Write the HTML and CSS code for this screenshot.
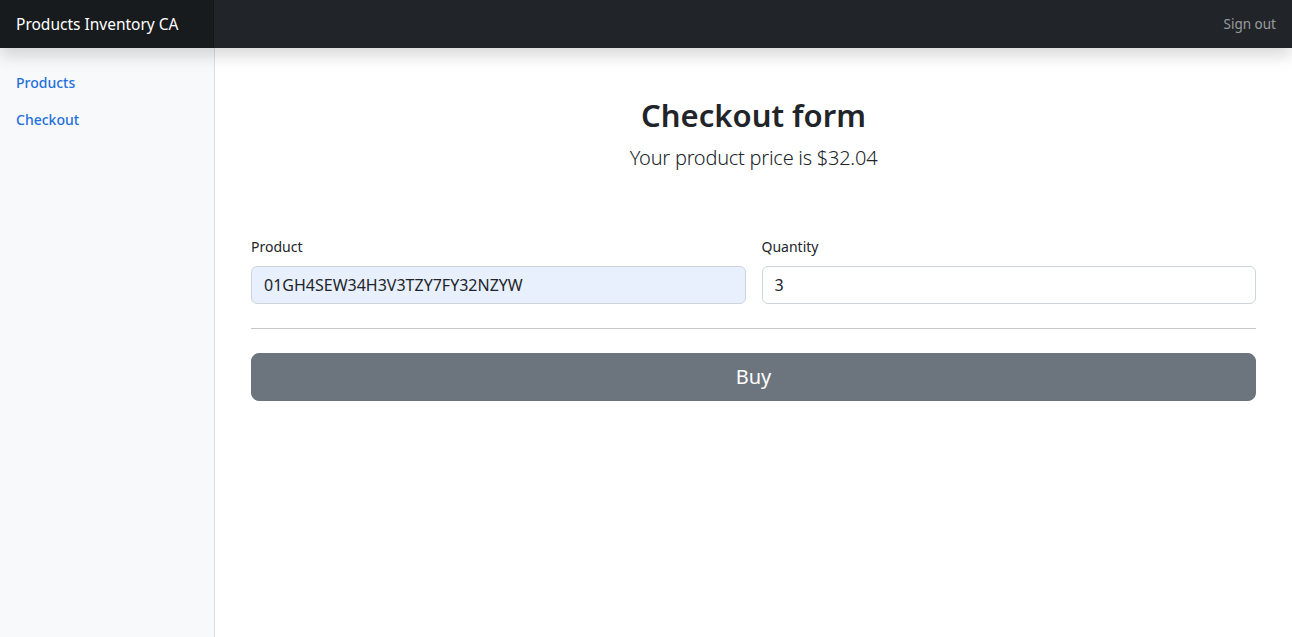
FILE: index.html
```html
<!DOCTYPE html>
<html lang="en">
<head>
<meta charset="utf-8">
<title>Products Inventory CA</title>
<link rel="stylesheet" href="styles.css">
</head>
<body>
<header class="navbar">
  <a class="brand" href="#">Products Inventory CA</a>
  <a class="signout" href="#">Sign out</a>
</header>
<div class="layout">
  <nav class="sidebar">
    <a class="side-link" href="#">Products</a>
    <a class="side-link" href="#">Checkout</a>
  </nav>
  <main class="main">
    <div class="intro">
      <h2 class="title">Checkout form</h2>
      <p class="lead">Your product price is $32.04</p>
    </div>
    <form class="form">
      <div class="row">
        <div class="col">
          <label class="label" for="product">Product</label>
          <input class="input input-filled" id="product" type="text" value="01GH4SEW34H3V3TZY7FY32NZYW">
        </div>
        <div class="col">
          <label class="label" for="qty">Quantity</label>
          <input class="input" id="qty" type="text" value="3">
        </div>
      </div>
      <hr class="divider">
      <button class="btn" type="button">Buy</button>
    </form>
  </main>
</div>
</body>
</html>
```

FILE: styles.css
```css
* { box-sizing: border-box; }
html, body { margin: 0; padding: 0; }
body {
  font-family: "Noto Sans", "Open Sans", sans-serif;
  font-size: 16px;
  line-height: 1.5;
  color: #212529;
  background: #fff;
  min-height: 100vh;
  display: flex;
  flex-direction: column;
}
a { text-decoration: none; }

.navbar {
  height: 48px;
  background: #212529;
  display: flex;
  align-items: stretch;
  justify-content: space-between;
  box-shadow: 0 8px 16px rgba(0,0,0,.15);
  position: relative;
  z-index: 2;
  flex: none;
}
.brand {
  width: 214px;
  padding: 1px 16px 0;
  display: flex;
  align-items: center;
  color: #fff;
  font-size: 15.5px;
  background: rgba(0,0,0,.25);
  box-shadow: inset -1px 0 0 rgba(0,0,0,.25);
  white-space: nowrap;
}
.signout {
  display: flex;
  align-items: center;
  padding: 1px 16px 0;
  color: rgba(255,255,255,.55);
  font-size: 13.5px;
}

.layout {
  flex: 1;
  display: flex;
}
.sidebar {
  width: 215px;
  flex: none;
  background: #f8f9fa;
  box-shadow: inset -1px 0 0 rgba(0,0,0,.1);
  padding-top: 16px;
  display: flex;
  flex-direction: column;
}
.side-link {
  display: block;
  padding: 8px 16px;
  font-size: 14px;
  line-height: 21px;
  font-weight: 500;
  color: #2470dc;
}

.main {
  flex: 1;
  padding: 0 36px;
}
.intro {
  padding: 48px 0 47px;
  text-align: center;
}
.title {
  margin: 0 0 8px;
  padding-top: 1px;
  font-size: 31px;
  line-height: 37px;
  font-weight: 600;
}
.lead {
  margin: 0 0 16px;
  padding-top: 1px;
  font-size: 20px;
  line-height: 30px;
  font-weight: 300;
  letter-spacing: -0.25px;
}

.row {
  display: flex;
  gap: 16px;
}
.col {
  flex: 1;
  min-width: 0;
}
.label {
  display: block;
  margin-bottom: 9px;
  font-size: 14px;
  line-height: 21px;
}
.input {
  display: block;
  width: 100%;
  height: 38px;
  padding: 6px 12px;
  font: inherit;
  font-size: 16px;
  color: #212529;
  background: #fff;
  border: 1px solid #ced4da;
  border-radius: 6px;
}
.input-filled { background: #e8f0fe; }

.divider {
  margin: 24px 0;
  border: 0;
  border-top: 1px solid rgba(33,37,41,.25);
}
.btn {
  display: block;
  width: 100%;
  height: 48px;
  padding: 8px 16px;
  font: inherit;
  font-size: 20px;
  line-height: 30px;
  color: #fff;
  background: #6c757d;
  border: 1px solid #6c757d;
  border-radius: 8px;
}
```
